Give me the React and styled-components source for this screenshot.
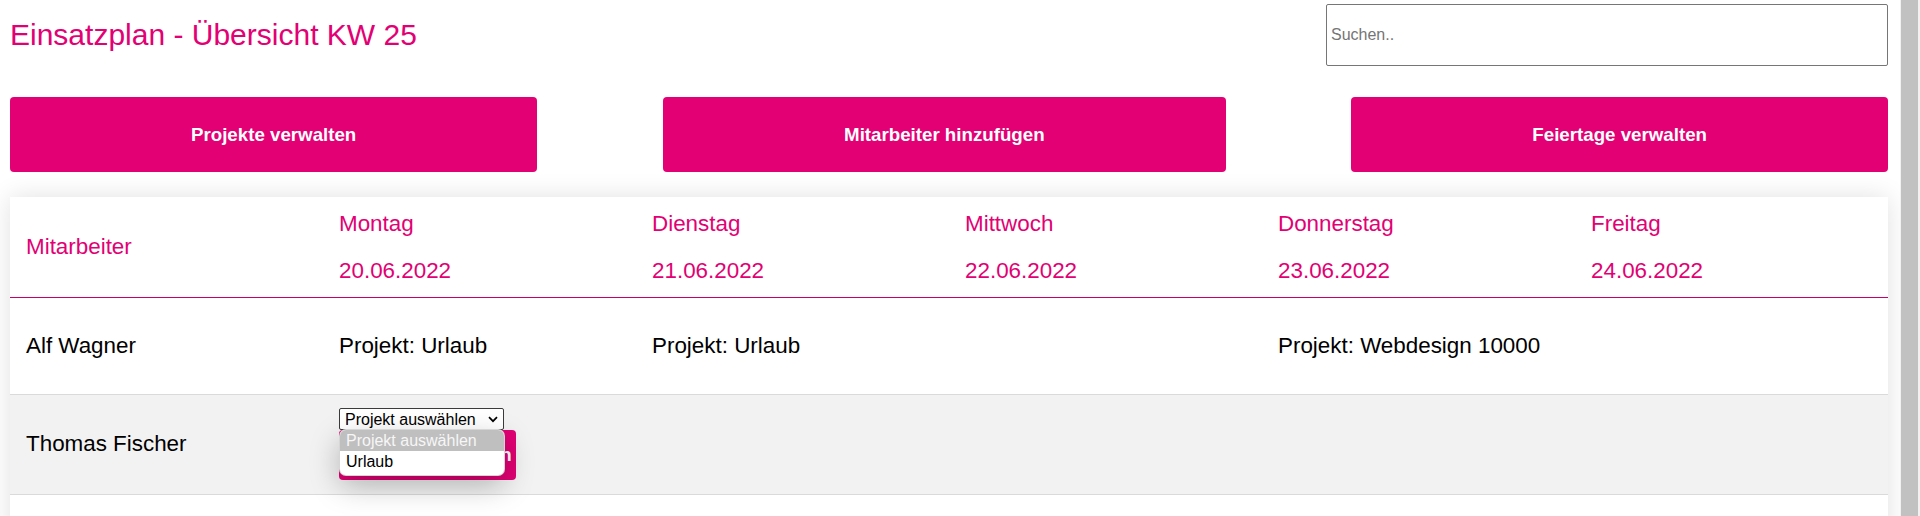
import React from 'react';
import styled, { createGlobalStyle } from 'styled-components';

const MAGENTA = '#e20074';

const GlobalStyle = createGlobalStyle`
  *, *::before, *::after {
    box-sizing: border-box;
  }
  html, body {
    margin: 0;
    padding: 0;
  }
  body {
    font-family: "Liberation Sans", Arial, sans-serif;
    background: #fff;
    overflow: hidden;
  }
`;

const Shell = styled.div`
  display: flex;
  height: 100vh;
  overflow: hidden;
`;

const Page = styled.main`
  flex: 1;
  min-width: 0;
  padding: 4px 12px 0 10px;
`;

const ScrollTrack = styled.div`
  flex: none;
  width: 20px;
  padding: 0 2px 0 1px;
  background: #f1f1f1;
`;

const ScrollThumb = styled.div`
  height: 100%;
  background: #c1c1c1;
`;

const TopBar = styled.header`
  display: flex;
  justify-content: space-between;
  align-items: center;
`;

const Title = styled.h1`
  margin: 0;
  font-size: 30px;
  font-weight: 400;
  color: ${MAGENTA};
`;

const SearchInput = styled.input`
  width: 562px;
  height: 62px;
  padding: 0 4px;
  border: 1px solid #767676;
  border-radius: 2px;
  font-family: inherit;
  font-size: 16px;
  color: #000;

  &::placeholder {
    color: #757575;
  }
`;

const ActionBar = styled.nav`
  display: flex;
  justify-content: space-between;
  margin-top: 31px;
`;

const ActionButton = styled.button`
  height: 75px;
  padding: 0 181px;
  border: none;
  border-radius: 4px;
  background: ${MAGENTA};
  color: #fff;
  font-family: inherit;
  font-size: 18.72px;
  font-weight: 700;
  cursor: pointer;
`;

const Card = styled.section`
  margin-top: 25px;
  background: #fff;
  box-shadow: 0 0 24px rgba(0, 0, 0, 0.12);
`;

const GridRow = styled.div`
  display: grid;
  grid-template-columns: repeat(6, 1fr);
  align-items: center;
  min-height: 97px;
  border-bottom: 1px solid #dadada;
  background: ${(p) => (p.$shaded ? '#f2f2f2' : '#fff')};
`;

const HeaderRow = styled(GridRow)`
  height: 101px;
  border-bottom-color: #c8006a;
`;

const Cell = styled.div`
  padding: 13px 16px 14px;
  font-size: 22.4px;
  line-height: 25.8px;
  color: ${(p) => (p.$head ? MAGENTA : '#000')};
`;

const DayHead = styled(Cell)`
  display: flex;
  flex-direction: column;
  gap: 21px;
  padding: 0 16px;
`;

const SelectWrap = styled.div`
  position: relative;
  width: 165px;
`;

const ProjectSelect = styled.select`
  display: block;
  width: 165px;
  height: 22px;
  padding: 0 20px 0 5px;
  border: 1px solid #3b3b3b;
  border-radius: 2px;
  background: #fff;
  color: #000;
  font-family: inherit;
  font-size: 16px;
  appearance: none;
`;

const Chevron = styled.svg`
  position: absolute;
  top: 8px;
  right: 6px;
  width: 10px;
  height: 7px;
  pointer-events: none;
`;

const DropList = styled.ul`
  position: absolute;
  top: 22px;
  left: 1px;
  z-index: 2;
  width: 164px;
  margin: 0;
  padding: 0 0 3px;
  list-style: none;
  background: #fff;
  border-radius: 6px;
  overflow: hidden;
  box-shadow: 0 0 0 1px #d6d6d6, 0 10px 30px rgba(0, 0, 0, 0.28);
`;

const DropOption = styled.li`
  padding: 0 6px;
  font-size: 16px;
  line-height: 21px;
  white-space: nowrap;
  background: ${(p) => (p.$active ? '#bfbfbf' : 'transparent')};
  color: ${(p) => (p.$active ? '#f6f6f6' : '#000')};
`;

const AssignButton = styled.button`
  display: block;
  width: 177px;
  height: 50px;
  padding: 0;
  border: none;
  border-radius: 4px;
  background: ${MAGENTA};
  color: #fff;
  font-family: inherit;
  font-size: 18.72px;
  font-weight: 700;
  white-space: nowrap;
`;

const days = [
  { name: 'Montag', date: '20.06.2022' },
  { name: 'Dienstag', date: '21.06.2022' },
  { name: 'Mittwoch', date: '22.06.2022' },
  { name: 'Donnerstag', date: '23.06.2022' },
  { name: 'Freitag', date: '24.06.2022' },
];

const plan = [
  { name: 'Alf Wagner', slots: ['Urlaub', 'Urlaub', null, 'Webdesign 10000', null] },
  { name: 'Thomas Fischer', slots: ['pick', null, null, null, null] },
  { name: '', slots: [null, null, null, null, null] },
];

function ProjectPicker() {
  return (
    <div>
      <SelectWrap>
        <ProjectSelect defaultValue="">
          <option value="">Projekt auswählen</option>
          <option value="urlaub">Urlaub</option>
        </ProjectSelect>
        <Chevron viewBox="0 0 10 7">
          <path d="M1 1.2l4 4 4-4" fill="none" stroke="#000" strokeWidth="1.7" />
        </Chevron>
        <DropList>
          <DropOption $active>Projekt auswählen</DropOption>
          <DropOption>Urlaub</DropOption>
        </DropList>
      </SelectWrap>
      <AssignButton>Projekt hinzufügen</AssignButton>
    </div>
  );
}

export default function App() {
  return (
    <Shell>
      <GlobalStyle />
      <Page>
        <TopBar>
          <Title>Einsatzplan - Übersicht KW 25</Title>
          <SearchInput type="text" placeholder="Suchen.." />
        </TopBar>

        <ActionBar>
          <ActionButton>Projekte verwalten</ActionButton>
          <ActionButton>Mitarbeiter hinzufügen</ActionButton>
          <ActionButton>Feiertage verwalten</ActionButton>
        </ActionBar>

        <Card>
          <HeaderRow>
            <Cell $head>Mitarbeiter</Cell>
            {days.map((d) => (
              <DayHead $head key={d.name}>
                <span>{d.name}</span>
                <span>{d.date}</span>
              </DayHead>
            ))}
          </HeaderRow>
          {plan.map((row, i) => (
            <GridRow key={i} $shaded={i % 2 === 1}>
              <Cell>{row.name}</Cell>
              {row.slots.map((slot, j) => (
                <Cell key={j}>
                  {slot === 'pick' ? <ProjectPicker /> : slot ? `Projekt: ${slot}` : null}
                </Cell>
              ))}
            </GridRow>
          ))}
        </Card>
      </Page>
      <ScrollTrack>
        <ScrollThumb />
      </ScrollTrack>
    </Shell>
  );
}
